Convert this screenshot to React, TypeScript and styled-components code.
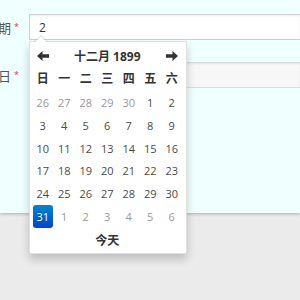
import styled, { createGlobalStyle } from 'styled-components';

const GlobalStyle = createGlobalStyle`
  html, body { margin: 0; padding: 0; background: #ebebeb; }
  body {
    font-family: "Open Sans", "Noto Sans CJK SC", sans-serif;
    font-size: 13px;
    color: #333;
  }
  #root { min-height: 300px; }
`;

const Panel = styled.div`
  height: 213px;
  box-sizing: border-box;
  padding-top: 14px;
  background: #f0ffff;
  box-shadow: 0 1px 3px rgba(0, 0, 0, 0.25);
  display: flex;
  flex-direction: column;
  gap: 22px;
`;

const Row = styled.div`
  position: relative;
  display: flex;
  align-items: center;
  height: 26px;
`;

const Label = styled.div`
  width: 29px;
  flex: none;
  box-sizing: border-box;
  padding-right: 10px;
  display: flex;
  align-items: center;
  justify-content: flex-end;
  overflow: hidden;
  white-space: nowrap;
  color: #555;
  font-size: 13px;
`;

const LabelText = styled.span`
  flex: none;
`;

const Star = styled.span`
  color: #e4393c;
  font-size: 9px;
  margin-left: 3px;
  position: relative;
  top: -1px;
`;

const Input = styled.div<{ $readonly?: boolean }>`
  flex: 1;
  height: 26px;
  box-sizing: border-box;
  padding: 0 9px;
  display: flex;
  align-items: center;
  border: 1px solid ${(p) => (p.$readonly ? '#dcdcdc' : '#cfcfcf')};
  border-right: none;
  background: ${(p) => (p.$readonly ? '#f7f7f7' : '#fff')};
  box-shadow: inset 0 1px 2px rgba(0, 0, 0, 0.08);
  color: #333;
  font-size: 12px;
`;

const Picker = styled.div`
  position: absolute;
  left: 29px;
  top: 27px;
  width: 158px;
  box-sizing: border-box;
  padding: 3px 3px 1px 2px;
  background: #fff;
  border: 1px solid rgba(0, 0, 0, 0.12);
  border-radius: 2px;
  box-shadow: 0 5px 10px rgba(0, 0, 0, 0.2);
  z-index: 10;

  &::before, &::after {
    content: '';
    position: absolute;
    border-left: 7px solid transparent;
    border-right: 7px solid transparent;
    border-bottom: 7px solid rgba(0, 0, 0, 0.15);
    top: -7px;
    left: 4px;
  }
  &::after {
    border-left-width: 6px;
    border-right-width: 6px;
    border-bottom: 6px solid #fff;
    top: -6px;
    left: 5px;
  }
`;

const Grid = styled.div<{ $rowHeight: number }>`
  display: grid;
  grid-template-columns: repeat(7, 21.5px);
  grid-auto-rows: ${(p) => p.$rowHeight}px;
  align-items: center;
  justify-items: center;
`;

const DaysGrid = styled(Grid)`
  margin-top: 2px;
`;

const NavArrow = styled.div`
  display: flex;
  align-items: center;
  justify-content: center;
  color: #333;
`;

const Title = styled.div`
  grid-column: 2 / 7;
  font-weight: bold;
  font-size: 12px;
  color: #333;
`;

const WeekDay = styled.div`
  font-weight: bold;
  font-size: 12px;
  color: #333;
`;

const Day = styled.div<{ $muted?: boolean; $active?: boolean }>`
  width: 20.5px;
  height: 23px;
  display: flex;
  align-items: center;
  justify-content: center;
  border-radius: 3px;
  font-size: 11px;
  color: ${(p) => (p.$active ? '#fff' : p.$muted ? '#999' : '#4a4a4a')};
  background: ${(p) =>
    p.$active ? 'linear-gradient(to bottom, #0088cc, #0044cc)' : 'transparent'};
  text-shadow: ${(p) => (p.$active ? '0 -1px 0 rgba(0,0,0,0.25)' : 'none')};
`;

const Today = styled.div`
  height: 24px;
  display: flex;
  align-items: center;
  justify-content: center;
  font-weight: bold;
  font-size: 12px;
  color: #333;
  width: 150.5px;
`;

const Arrow = ({ dir }: { dir: 'left' | 'right' }) => (
  <svg width="12" height="10" viewBox="0 0 12 10">
    <path
      d="M0 5 L5.5 0 L5.5 3.2 L12 3.2 L12 6.8 L5.5 6.8 L5.5 10 Z"
      fill="currentColor"
      transform={dir === 'right' ? 'matrix(-1 0 0 1 12 0)' : undefined}
    />
  </svg>
);

const weekDays = ['日', '一', '二', '三', '四', '五', '六'];

type Cell = { n: number; muted?: boolean; active?: boolean };

const buildDays = (): Cell[] => {
  const cells: Cell[] = [];
  for (let i = 26; i <= 30; i++) cells.push({ n: i, muted: true });
  for (let i = 1; i <= 31; i++) cells.push({ n: i, active: i === 31 });
  for (let i = 1; i <= 6; i++) cells.push({ n: i, muted: true });
  return cells;
};

export default function App() {
  const days = buildDays();
  return (
    <>
      <GlobalStyle />
      <Panel>
        <Row>
          <Label>
            <LabelText>出生日期</LabelText>
            <Star>*</Star>
          </Label>
          <Input>2</Input>
          <Picker>
            <Grid $rowHeight={22}>
              <NavArrow>
                <Arrow dir="left" />
              </NavArrow>
              <Title>十二月 1899</Title>
              <NavArrow>
                <Arrow dir="right" />
              </NavArrow>
              {weekDays.map((w) => (
                <WeekDay key={w}>{w}</WeekDay>
              ))}
            </Grid>
            <DaysGrid $rowHeight={22.8}>
              {days.map((d, i) => (
                <Day key={i} $muted={d.muted} $active={d.active}>
                  {d.n}
                </Day>
              ))}
            </DaysGrid>
            <Today>今天</Today>
          </Picker>
        </Row>
        <Row>
          <Label>
            <LabelText>入职日</LabelText>
            <Star>*</Star>
          </Label>
          <Input $readonly />
        </Row>
      </Panel>
    </>
  );
}
